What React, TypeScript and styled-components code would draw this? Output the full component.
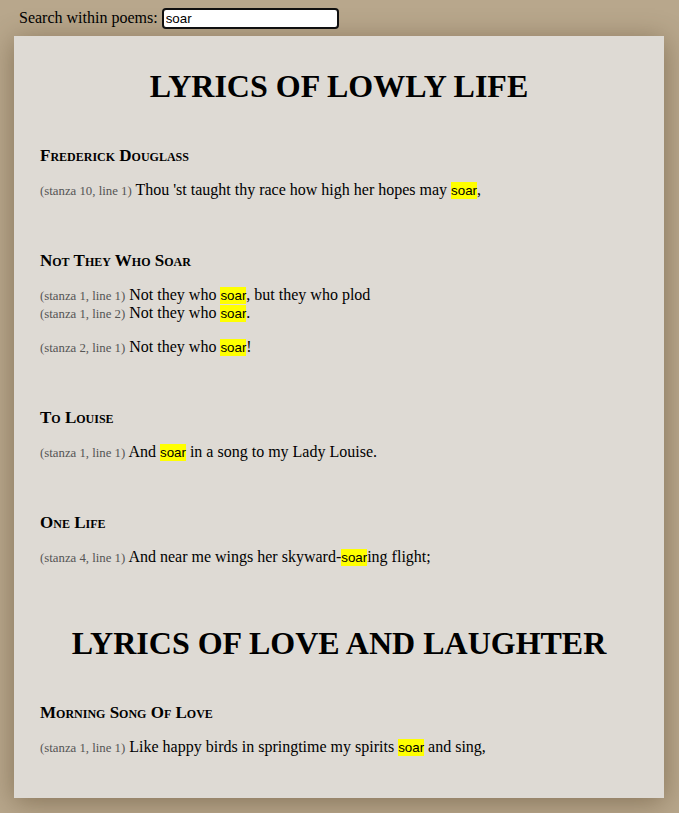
import React from "react";
import styled, { createGlobalStyle } from "styled-components";

const GlobalStyle = createGlobalStyle`
  html, body {
    margin: 0;
    padding: 0;
    background: #b8a78c;
    font-family: "Liberation Serif", "Times New Roman", serif;
    color: #000;
  }
`;

const Page = styled.div`
  min-height: 813px;
  padding: 0 15px 14px 14px;
  box-sizing: border-box;
`;

const SearchBar = styled.div`
  height: 36px;
  display: flex;
  align-items: center;
  gap: 4px;
  padding-left: 5px;
  font-size: 16px;
`;

const SearchLabel = styled.label`
  font-family: "Liberation Serif", serif;
  font-size: 16px;
`;

const SearchInput = styled.input`
  box-sizing: border-box;
  width: 177px;
  height: 21px;
  border: 2px solid #101010;
  border-radius: 4px;
  background: #fff;
  padding: 0 2px;
  font-family: "Liberation Sans", Arial, sans-serif;
  font-size: 13.33px;
  color: #000;
  outline: none;
  margin: 0;
`;

const Card = styled.main`
  width: 650px;
  box-sizing: border-box;
  background: #dedad4;
  box-shadow: 0 4px 26px rgba(70, 50, 25, 0.45);
  padding: 32px 26px 42px;
  display: flex;
  flex-direction: column;
  gap: 59px;
`;

const Book = styled.section`
  display: flex;
  flex-direction: column;
`;

const BookTitle = styled.h1`
  margin: 0 0 40px;
  font-size: 32px;
  line-height: 37px;
  font-weight: bold;
  text-align: center;
`;

const PoemList = styled.div`
  display: flex;
  flex-direction: column;
  gap: 51px;
`;

const Poem = styled.article`
  display: flex;
  flex-direction: column;
`;

const PoemTitle = styled.h3`
  margin: 0 0 14px;
  font-size: 17px;
  line-height: 22px;
  height: 22px;
  font-weight: bold;
  font-variant: small-caps;
`;

const Stanzas = styled.div`
  display: flex;
  flex-direction: column;
  gap: 16px;
`;

const Stanza = styled.div`
  display: flex;
  flex-direction: column;
`;

const Line = styled.div`
  font-size: 16px;
  line-height: 18px;
  height: 18px;
  white-space: nowrap;
`;

const LineRef = styled.span`
  font-size: 12.8px;
  line-height: 13px;
  color: #555;
`;

const Hit = styled.span`
  font-family: "Liberation Sans", Arial, sans-serif;
  font-size: 13.33px;
  line-height: 13px;
  background: #ffff00;
  padding: 1px 0;
`;

type PoemData = {
  title: string;
  stanzas: { ref: string; text: string }[][];
};

type BookData = { title: string; poems: PoemData[] };

const books: BookData[] = [
  {
    title: "LYRICS OF LOWLY LIFE",
    poems: [
      {
        title: "Frederick Douglass",
        stanzas: [
          [
            {
              ref: "(stanza 10, line 1)",
              text: "Thou 'st taught thy race how high her hopes may soar,",
            },
          ],
        ],
      },
      {
        title: "Not They Who Soar",
        stanzas: [
          [
            { ref: "(stanza 1, line 1)", text: "Not they who soar, but they who plod" },
            { ref: "(stanza 1, line 2)", text: "Not they who soar." },
          ],
          [{ ref: "(stanza 2, line 1)", text: "Not they who soar!" }],
        ],
      },
      {
        title: "To Louise",
        stanzas: [
          [{ ref: "(stanza 1, line 1)", text: "And soar in a song to my Lady Louise." }],
        ],
      },
      {
        title: "One Life",
        stanzas: [
          [
            {
              ref: "(stanza 4, line 1)",
              text: "And near me wings her skyward-soaring flight;",
            },
          ],
        ],
      },
    ],
  },
  {
    title: "LYRICS OF LOVE AND LAUGHTER",
    poems: [
      {
        title: "Morning Song Of Love",
        stanzas: [
          [
            {
              ref: "(stanza 1, line 1)",
              text: "Like happy birds in springtime my spirits soar and sing,",
            },
          ],
        ],
      },
    ],
  },
];

const QUERY = "soar";

function highlight(text: string, query: string) {
  const parts: React.ReactNode[] = [];
  const lower = text.toLowerCase();
  let i = 0;
  let k = 0;
  while (i < text.length) {
    const idx = lower.indexOf(query, i);
    if (idx < 0) {
      parts.push(text.slice(i));
      break;
    }
    if (idx > i) parts.push(text.slice(i, idx));
    parts.push(<Hit key={k++}>{text.slice(idx, idx + query.length)}</Hit>);
    i = idx + query.length;
  }
  return parts;
}

export default function App() {
  return (
    <>
      <GlobalStyle />
      <Page>
        <SearchBar>
          <SearchLabel htmlFor="search">Search within poems:</SearchLabel>
          <SearchInput id="search" defaultValue={QUERY} autoFocus />
        </SearchBar>
        <Card>
          {books.map((book) => (
            <Book key={book.title}>
              <BookTitle>{book.title}</BookTitle>
              <PoemList>
                {book.poems.map((poem) => (
                  <Poem key={poem.title}>
                    <PoemTitle>{poem.title}</PoemTitle>
                    <Stanzas>
                      {poem.stanzas.map((stanza, si) => (
                        <Stanza key={si}>
                          {stanza.map((line) => (
                            <Line key={line.ref}>
                              <LineRef>{line.ref}</LineRef> {highlight(line.text, QUERY)}
                            </Line>
                          ))}
                        </Stanza>
                      ))}
                    </Stanzas>
                  </Poem>
                ))}
              </PoemList>
            </Book>
          ))}
        </Card>
      </Page>
    </>
  );
}
